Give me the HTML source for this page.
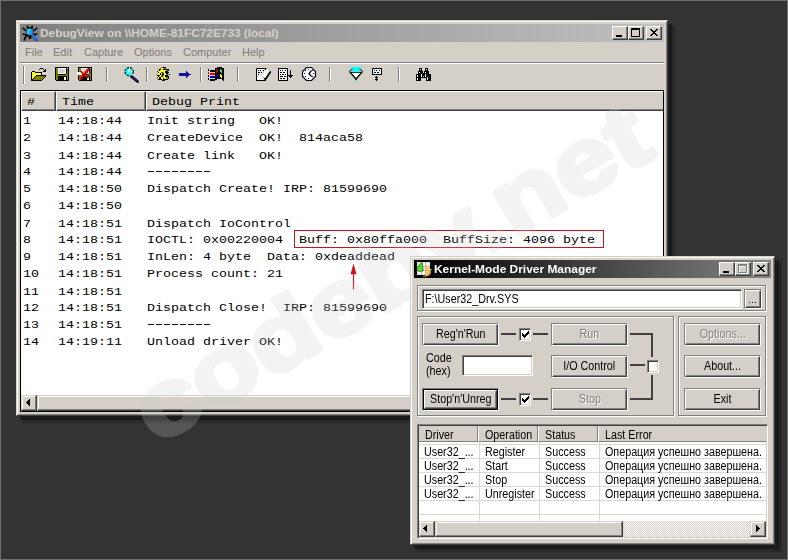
<!DOCTYPE html>
<html>
<head>
<meta charset="utf-8">
<title>DebugView</title>
<style>
*{box-sizing:border-box;margin:0;padding:0}
html,body{width:788px;height:560px;overflow:hidden;background:#333333}
body{position:relative;font-family:"Liberation Sans",sans-serif;font-size:11px;color:#000}
.abs{position:absolute}
#edge{position:absolute;left:0;top:0;width:788px;height:560px;border:1px solid #707070;z-index:50;pointer-events:none}
.win{position:absolute;background:#D4D0C8;
 border:1px solid;border-color:#D4D0C8 #404040 #404040 #D4D0C8;
 box-shadow:inset 1px 1px 0 #fff, inset -1px -1px 0 #808080, 4px 4px 0 rgba(0,0,0,.36), 5.5px 5.5px 1px 1px rgba(0,0,0,.2)}
.raised{background:#D4D0C8;border:1px solid;border-color:#fff #404040 #404040 #fff;box-shadow:inset -1px -1px 0 #808080}
.btn{position:absolute;background:#D4D0C8;border:1px solid;border-color:#fff #404040 #404040 #fff;
 box-shadow:inset -1px -1px 0 #808080, inset 1px 1px 0 #D4D0C8;text-align:center;white-space:nowrap}
.sunken{border:1px solid;border-color:#808080 #fff #fff #808080;box-shadow:inset 1px 1px 0 #404040, inset -1px -1px 0 #D4D0C8;background:#fff}
.etched{position:absolute;border:1px solid #808080;box-shadow:1px 1px 0 #fff, inset 1px 1px 0 #fff}
.mono{font-family:"Liberation Mono",monospace;font-size:13.33px;white-space:pre;color:#000;transform:scaleY(.8);transform-origin:0 0}
.tbtn{position:absolute;width:16px;height:14px;top:2px;background:#D4D0C8;border:1px solid;border-color:#fff #404040 #404040 #fff;box-shadow:inset -1px -1px 0 #808080}
.hdr{position:absolute;top:0;height:20px;background:#D4D0C8;border:1px solid;border-color:#fff #404040 #404040 #fff;box-shadow:inset -1px -1px 0 #808080}
.row{position:absolute;left:0;height:17px;line-height:17px}
.sep{position:absolute;top:67px;width:2px;height:15px;border-left:1px solid #808080;border-right:1px solid #fff}
.sb{border-color:#D4D0C8 #404040 #404040 #D4D0C8;box-shadow:inset -1px -1px 0 #808080, inset 1px 1px 0 #fff}
.kb{line-height:19px}
.ms{display:inline-block;font-size:12.5px;transform:scaleX(.86);transform-origin:center center;white-space:pre}
.msl{display:inline-block;font-size:12.5px;transform:scaleX(.86);transform-origin:left center;white-space:pre}
.khdr{position:absolute;top:0;height:16px;background:#D4D0C8;border-left:1px solid #fff;border-right:1px solid #808080;border-bottom:1px solid #808080}
.se{position:absolute;border:1px solid;border-color:#808080 #fff #fff #808080}
.dis{color:#808080;text-shadow:1px 1px 0 #fff}
</style>
</head>
<body>

<!-- ================= DebugView window ================= -->
<div class="win" id="dv" style="left:16px;top:20px;width:652px;height:396px"></div>
<div class="abs" id="dvtitle" style="left:20px;top:24px;width:644px;height:18px;background:linear-gradient(to right,#808080,#c0c0c0)">
  <svg class="abs" id="dvicon" style="left:1px;top:1px" width="17" height="16" viewBox="21 25 17 16">
    <g stroke="#000" stroke-width="1.6" fill="none" stroke-linecap="square">
      <path d="M27.5 26.3v1.2M32.2 26.3v1.2"/>
      <path d="M23.3 28.3l2.6 2.2M36.6 28.3l-2.7 2.2M23.4 34.2l2.6.6M36.6 34.2l-2.2.4M24.5 39.8l.4-2l1.9-2.2"/>
    </g>
    <path d="M27.4 27.2h5.2v1.6h-5.2z" fill="#000"/>
    <ellipse cx="29.9" cy="32.6" rx="3.6" ry="5" fill="#111"/>
    <rect x="28.8" y="36.6" width="2.4" height="2.4" fill="#000"/>
    <path d="M32.2 35.4l5 5" stroke="#0a1a80" stroke-width="2.6" stroke-linecap="round"/>
    <path d="M32 35l4.9 4.9" stroke="#2a8cf4" stroke-width="1.7" stroke-linecap="round"/>
    <circle cx="29.8" cy="31.8" r="3.2" fill="#2f8ff2"/>
    <path d="M26.8 32.2a3 3 0 0 1 3-3.4q.8 0 .9.6q-1.4 1.2-1.2 3.2q.1 1.6-.8 2.2q-1.5-.6-1.9-2.600z" fill="#14d8fb"/>
    <rect x="30.2" y="30" width=".8" height=".8" fill="#7d8ea0"/><rect x="31.2" y="32" width=".8" height=".8" fill="#7d8ea0"/>
  </svg>
  <div class="abs" id="dvtt" style="left:20px;top:2px;font-weight:bold;color:#D4D0C8;font-size:11px;line-height:14px;white-space:pre;transform:scaleX(1.077);transform-origin:left center">DebugView on \\HOME-81FC72E733 (local)</div>
  <div class="tbtn" style="left:592px"><svg class="abs" style="left:-1px;top:-1px" width="16" height="14" shape-rendering="crispEdges"><rect x="4" y="9" width="6" height="2" fill="#000"/></svg></div>
  <div class="tbtn" style="left:608px"><svg class="abs" style="left:-1px;top:-1px" width="16" height="14" shape-rendering="crispEdges"><path d="M3 2h9v9h-9zM4 4v6h7v-6z" fill="#000" fill-rule="evenodd"/></svg></div>
  <div class="tbtn" style="left:626px"><svg class="abs" style="left:-1px;top:-1px" width="16" height="14" shape-rendering="crispEdges"><path d="M4 3h2v1h1v1h2v-1h1v-1h2v1h-1v1h-1v1h-1v1h1v1h1v1h1v1h-2v-1h-1v-1h-2v1h-1v1h-2v-1h1v-1h1v-1h1v-1h-1v-1h-1v-1h-1z" fill="#000"/></svg></div>
</div>
<!-- menu -->
<div class="abs" id="menu" style="left:20px;top:42px;width:644px;height:20px;color:#7d7d7d;line-height:21px">
  <span class="abs" style="left:5px">File</span>
  <span class="abs" style="left:33px">Edit</span>
  <span class="abs" style="left:64px">Capture</span>
  <span class="abs" style="left:114px">Options</span>
  <span class="abs" style="left:163px">Computer</span>
  <span class="abs" style="left:222px">Help</span>
</div>
<div class="abs" style="left:20px;top:62px;width:644px;height:2px;border-top:1px solid #808080;border-bottom:1px solid #fff"></div>
<!-- toolbar -->
<div class="sep" style="left:23px;top:66px;height:18px"></div>
<div class="sep" style="left:106px"></div>
<div class="sep" style="left:146px"></div>
<div class="sep" style="left:200px"></div>
<div class="sep" style="left:237px"></div>
<div class="sep" style="left:329px"></div>
<div class="sep" style="left:398px"></div>
<svg class="abs" id="tbicons" style="left:20px;top:64px" width="644" height="24" viewBox="20 64 644 24"><g shape-rendering="crispEdges"><rect x="40" y="68" width="3" height="1" fill="#000"/><rect x="39" y="69" width="1" height="1" fill="#000"/><rect x="43" y="69" width="1" height="1" fill="#000"/><rect x="45" y="69" width="1" height="1" fill="#000"/><rect x="44" y="70" width="2" height="1" fill="#000"/><rect x="32" y="71" width="3" height="1" fill="#000"/><rect x="43" y="71" width="3" height="1" fill="#000"/><rect x="31" y="72" width="1" height="1" fill="#000"/><rect x="32" y="72" width="3" height="1" fill="#ffff00"/><rect x="35" y="72" width="7" height="1" fill="#000"/><rect x="31" y="73" width="1" height="1" fill="#000"/><rect x="32" y="73" width="1" height="1" fill="#ffff00"/><rect x="33" y="73" width="1" height="1" fill="#fff"/><rect x="34" y="73" width="3" height="1" fill="#ffff00"/><rect x="37" y="73" width="1" height="1" fill="#fff"/><rect x="38" y="73" width="3" height="1" fill="#ffff00"/><rect x="41" y="73" width="1" height="1" fill="#000"/><rect x="31" y="74" width="1" height="1" fill="#000"/><rect x="32" y="74" width="3" height="1" fill="#ffff00"/><rect x="35" y="74" width="1" height="1" fill="#fff"/><rect x="36" y="74" width="3" height="1" fill="#ffff00"/><rect x="39" y="74" width="1" height="1" fill="#fff"/><rect x="40" y="74" width="1" height="1" fill="#ffff00"/><rect x="41" y="74" width="1" height="1" fill="#000"/><rect x="31" y="75" width="1" height="1" fill="#000"/><rect x="32" y="75" width="1" height="1" fill="#ffff00"/><rect x="33" y="75" width="1" height="1" fill="#fff"/><rect x="34" y="75" width="2" height="1" fill="#ffff00"/><rect x="36" y="75" width="10" height="1" fill="#000"/><rect x="31" y="76" width="1" height="1" fill="#000"/><rect x="32" y="76" width="3" height="1" fill="#ffff00"/><rect x="35" y="76" width="1" height="1" fill="#000"/><rect x="36" y="76" width="9" height="1" fill="#808000"/><rect x="45" y="76" width="1" height="1" fill="#000"/><rect x="31" y="77" width="1" height="1" fill="#000"/><rect x="32" y="77" width="1" height="1" fill="#fff"/><rect x="33" y="77" width="1" height="1" fill="#ffff00"/><rect x="34" y="77" width="1" height="1" fill="#000"/><rect x="35" y="77" width="9" height="1" fill="#808000"/><rect x="44" y="77" width="1" height="1" fill="#000"/><rect x="31" y="78" width="1" height="1" fill="#000"/><rect x="32" y="78" width="1" height="1" fill="#ffff00"/><rect x="33" y="78" width="1" height="1" fill="#000"/><rect x="34" y="78" width="9" height="1" fill="#808000"/><rect x="43" y="78" width="1" height="1" fill="#000"/><rect x="31" y="79" width="2" height="1" fill="#000"/><rect x="33" y="79" width="9" height="1" fill="#808000"/><rect x="42" y="79" width="1" height="1" fill="#000"/><rect x="31" y="80" width="11" height="1" fill="#000"/><rect x="55" y="67" width="14" height="1" fill="#000"/><rect x="55" y="68" width="1" height="1" fill="#000"/><rect x="56" y="68" width="2" height="1" fill="#808000"/><rect x="58" y="68" width="8" height="1" fill="#fff"/><rect x="66" y="68" width="1" height="1" fill="#000"/><rect x="67" y="68" width="1" height="1" fill="#fff"/><rect x="68" y="68" width="1" height="1" fill="#000"/><rect x="55" y="69" width="1" height="1" fill="#000"/><rect x="56" y="69" width="2" height="1" fill="#808000"/><rect x="58" y="69" width="1" height="1" fill="#fff"/><rect x="59" y="69" width="6" height="1" fill="#d4d0c8"/><rect x="65" y="69" width="1" height="1" fill="#fff"/><rect x="66" y="69" width="3" height="1" fill="#000"/><rect x="55" y="70" width="1" height="1" fill="#000"/><rect x="56" y="70" width="2" height="1" fill="#808000"/><rect x="58" y="70" width="1" height="1" fill="#fff"/><rect x="59" y="70" width="6" height="1" fill="#d4d0c8"/><rect x="65" y="70" width="1" height="1" fill="#fff"/><rect x="66" y="70" width="1" height="1" fill="#000"/><rect x="67" y="70" width="1" height="1" fill="#808000"/><rect x="68" y="70" width="1" height="1" fill="#000"/><rect x="55" y="71" width="1" height="1" fill="#000"/><rect x="56" y="71" width="2" height="1" fill="#808000"/><rect x="58" y="71" width="1" height="1" fill="#fff"/><rect x="59" y="71" width="6" height="1" fill="#d4d0c8"/><rect x="65" y="71" width="1" height="1" fill="#fff"/><rect x="66" y="71" width="1" height="1" fill="#000"/><rect x="67" y="71" width="1" height="1" fill="#808000"/><rect x="68" y="71" width="1" height="1" fill="#000"/><rect x="55" y="72" width="1" height="1" fill="#000"/><rect x="56" y="72" width="2" height="1" fill="#808000"/><rect x="58" y="72" width="1" height="1" fill="#fff"/><rect x="59" y="72" width="6" height="1" fill="#d4d0c8"/><rect x="65" y="72" width="1" height="1" fill="#fff"/><rect x="66" y="72" width="1" height="1" fill="#000"/><rect x="67" y="72" width="1" height="1" fill="#808000"/><rect x="68" y="72" width="1" height="1" fill="#000"/><rect x="55" y="73" width="1" height="1" fill="#000"/><rect x="56" y="73" width="2" height="1" fill="#808000"/><rect x="58" y="73" width="8" height="1" fill="#fff"/><rect x="66" y="73" width="1" height="1" fill="#000"/><rect x="67" y="73" width="1" height="1" fill="#808000"/><rect x="68" y="73" width="1" height="1" fill="#000"/><rect x="55" y="74" width="1" height="1" fill="#000"/><rect x="56" y="74" width="2" height="1" fill="#808000"/><rect x="58" y="74" width="8" height="1" fill="#000"/><rect x="66" y="74" width="2" height="1" fill="#808000"/><rect x="68" y="74" width="1" height="1" fill="#000"/><rect x="55" y="75" width="1" height="1" fill="#000"/><rect x="56" y="75" width="12" height="1" fill="#808000"/><rect x="68" y="75" width="1" height="1" fill="#000"/><rect x="55" y="76" width="1" height="1" fill="#000"/><rect x="56" y="76" width="2" height="1" fill="#808000"/><rect x="58" y="76" width="9" height="1" fill="#000"/><rect x="67" y="76" width="1" height="1" fill="#808000"/><rect x="68" y="76" width="1" height="1" fill="#000"/><rect x="55" y="77" width="1" height="1" fill="#000"/><rect x="56" y="77" width="2" height="1" fill="#808000"/><rect x="58" y="77" width="6" height="1" fill="#000"/><rect x="64" y="77" width="2" height="1" fill="#fff"/><rect x="66" y="77" width="1" height="1" fill="#000"/><rect x="67" y="77" width="1" height="1" fill="#808000"/><rect x="68" y="77" width="1" height="1" fill="#000"/><rect x="55" y="78" width="1" height="1" fill="#000"/><rect x="56" y="78" width="2" height="1" fill="#808000"/><rect x="58" y="78" width="6" height="1" fill="#000"/><rect x="64" y="78" width="2" height="1" fill="#fff"/><rect x="66" y="78" width="1" height="1" fill="#000"/><rect x="67" y="78" width="1" height="1" fill="#808000"/><rect x="68" y="78" width="1" height="1" fill="#000"/><rect x="55" y="79" width="1" height="1" fill="#000"/><rect x="56" y="79" width="2" height="1" fill="#808000"/><rect x="58" y="79" width="6" height="1" fill="#000"/><rect x="64" y="79" width="2" height="1" fill="#fff"/><rect x="66" y="79" width="1" height="1" fill="#000"/><rect x="67" y="79" width="1" height="1" fill="#808000"/><rect x="68" y="79" width="1" height="1" fill="#000"/><rect x="56" y="80" width="13" height="1" fill="#000"/><rect x="78" y="67" width="14" height="1" fill="#000"/><rect x="78" y="68" width="1" height="1" fill="#000"/><rect x="79" y="68" width="2" height="1" fill="#808000"/><rect x="81" y="68" width="8" height="1" fill="#fff"/><rect x="89" y="68" width="1" height="1" fill="#000"/><rect x="90" y="68" width="1" height="1" fill="#fff"/><rect x="91" y="68" width="1" height="1" fill="#000"/><rect x="78" y="69" width="1" height="1" fill="#000"/><rect x="79" y="69" width="2" height="1" fill="#808000"/><rect x="81" y="69" width="1" height="1" fill="#fff"/><rect x="82" y="69" width="6" height="1" fill="#d4d0c8"/><rect x="88" y="69" width="1" height="1" fill="#fff"/><rect x="89" y="69" width="3" height="1" fill="#000"/><rect x="78" y="70" width="1" height="1" fill="#000"/><rect x="79" y="70" width="2" height="1" fill="#808000"/><rect x="81" y="70" width="1" height="1" fill="#fff"/><rect x="82" y="70" width="6" height="1" fill="#d4d0c8"/><rect x="88" y="70" width="1" height="1" fill="#fff"/><rect x="89" y="70" width="1" height="1" fill="#000"/><rect x="90" y="70" width="1" height="1" fill="#808000"/><rect x="91" y="70" width="1" height="1" fill="#000"/><rect x="78" y="71" width="1" height="1" fill="#000"/><rect x="79" y="71" width="2" height="1" fill="#808000"/><rect x="81" y="71" width="1" height="1" fill="#fff"/><rect x="82" y="71" width="6" height="1" fill="#d4d0c8"/><rect x="88" y="71" width="1" height="1" fill="#fff"/><rect x="89" y="71" width="1" height="1" fill="#000"/><rect x="90" y="71" width="1" height="1" fill="#808000"/><rect x="91" y="71" width="1" height="1" fill="#000"/><rect x="78" y="72" width="1" height="1" fill="#000"/><rect x="79" y="72" width="2" height="1" fill="#808000"/><rect x="81" y="72" width="1" height="1" fill="#fff"/><rect x="82" y="72" width="6" height="1" fill="#d4d0c8"/><rect x="88" y="72" width="1" height="1" fill="#fff"/><rect x="89" y="72" width="1" height="1" fill="#000"/><rect x="90" y="72" width="1" height="1" fill="#808000"/><rect x="91" y="72" width="1" height="1" fill="#000"/><rect x="78" y="73" width="1" height="1" fill="#000"/><rect x="79" y="73" width="2" height="1" fill="#808000"/><rect x="81" y="73" width="8" height="1" fill="#fff"/><rect x="89" y="73" width="1" height="1" fill="#000"/><rect x="90" y="73" width="1" height="1" fill="#808000"/><rect x="91" y="73" width="1" height="1" fill="#000"/><rect x="78" y="74" width="1" height="1" fill="#000"/><rect x="79" y="74" width="2" height="1" fill="#808000"/><rect x="81" y="74" width="8" height="1" fill="#000"/><rect x="89" y="74" width="2" height="1" fill="#808000"/><rect x="91" y="74" width="1" height="1" fill="#000"/><rect x="78" y="75" width="1" height="1" fill="#000"/><rect x="79" y="75" width="12" height="1" fill="#808000"/><rect x="91" y="75" width="1" height="1" fill="#000"/><rect x="78" y="76" width="1" height="1" fill="#000"/><rect x="79" y="76" width="2" height="1" fill="#808000"/><rect x="81" y="76" width="9" height="1" fill="#000"/><rect x="90" y="76" width="1" height="1" fill="#808000"/><rect x="91" y="76" width="1" height="1" fill="#000"/><rect x="78" y="77" width="1" height="1" fill="#000"/><rect x="79" y="77" width="2" height="1" fill="#808000"/><rect x="81" y="77" width="6" height="1" fill="#000"/><rect x="87" y="77" width="2" height="1" fill="#fff"/><rect x="89" y="77" width="1" height="1" fill="#000"/><rect x="90" y="77" width="1" height="1" fill="#808000"/><rect x="91" y="77" width="1" height="1" fill="#000"/><rect x="78" y="78" width="1" height="1" fill="#000"/><rect x="79" y="78" width="2" height="1" fill="#808000"/><rect x="81" y="78" width="6" height="1" fill="#000"/><rect x="87" y="78" width="2" height="1" fill="#fff"/><rect x="89" y="78" width="1" height="1" fill="#000"/><rect x="90" y="78" width="1" height="1" fill="#808000"/><rect x="91" y="78" width="1" height="1" fill="#000"/><rect x="78" y="79" width="1" height="1" fill="#000"/><rect x="79" y="79" width="2" height="1" fill="#808000"/><rect x="81" y="79" width="6" height="1" fill="#000"/><rect x="87" y="79" width="2" height="1" fill="#fff"/><rect x="89" y="79" width="1" height="1" fill="#000"/><rect x="90" y="79" width="1" height="1" fill="#808000"/><rect x="91" y="79" width="1" height="1" fill="#000"/><rect x="79" y="80" width="13" height="1" fill="#000"/><rect x="77" y="72" width="5" height="3" fill="#fff"/><rect x="161" y="67" width="2" height="1" fill="#808000"/><rect x="163" y="67" width="3" height="1" fill="#000"/><rect x="160" y="68" width="1" height="1" fill="#808000"/><rect x="161" y="68" width="2" height="1" fill="#ffff00"/><rect x="163" y="68" width="3" height="1" fill="#808000"/><rect x="158" y="69" width="1" height="1" fill="#808000"/><rect x="159" y="69" width="2" height="1" fill="#000"/><rect x="161" y="69" width="2" height="1" fill="#ffff00"/><rect x="163" y="69" width="6" height="1" fill="#000"/><rect x="157" y="70" width="2" height="1" fill="#ffff00"/><rect x="159" y="70" width="1" height="1" fill="#000"/><rect x="161" y="70" width="2" height="1" fill="#ffff00"/><rect x="164" y="70" width="2" height="1" fill="#ffff00"/><rect x="166" y="70" width="2" height="1" fill="#808000"/><rect x="168" y="70" width="1" height="1" fill="#000"/><rect x="157" y="71" width="1" height="1" fill="#000"/><rect x="158" y="71" width="7" height="1" fill="#ffff00"/><rect x="165" y="71" width="3" height="1" fill="#000"/><rect x="158" y="72" width="1" height="1" fill="#000"/><rect x="159" y="72" width="2" height="1" fill="#ffff00"/><rect x="161" y="72" width="1" height="1" fill="#808000"/><rect x="162" y="72" width="1" height="1" fill="#000"/><rect x="164" y="72" width="1" height="1" fill="#ffff00"/><rect x="165" y="72" width="4" height="1" fill="#000"/><rect x="158" y="73" width="2" height="1" fill="#ffff00"/><rect x="160" y="73" width="1" height="1" fill="#000"/><rect x="161" y="73" width="1" height="1" fill="#ffff00"/><rect x="162" y="73" width="1" height="1" fill="#808000"/><rect x="163" y="73" width="1" height="1" fill="#000"/><rect x="164" y="73" width="2" height="1" fill="#ffff00"/><rect x="166" y="73" width="2" height="1" fill="#000"/><rect x="156" y="74" width="1" height="1" fill="#808000"/><rect x="157" y="74" width="1" height="1" fill="#fff"/><rect x="158" y="74" width="2" height="1" fill="#ffff00"/><rect x="160" y="74" width="1" height="1" fill="#000"/><rect x="161" y="74" width="1" height="1" fill="#808000"/><rect x="162" y="74" width="2" height="1" fill="#000"/><rect x="164" y="74" width="1" height="1" fill="#ffff00"/><rect x="165" y="74" width="1" height="1" fill="#fff"/><rect x="166" y="74" width="3" height="1" fill="#808000"/><rect x="169" y="74" width="1" height="1" fill="#000"/><rect x="157" y="75" width="3" height="1" fill="#000"/><rect x="160" y="75" width="2" height="1" fill="#ffff00"/><rect x="162" y="75" width="1" height="1" fill="#000"/><rect x="163" y="75" width="1" height="1" fill="#808000"/><rect x="164" y="75" width="1" height="1" fill="#ffff00"/><rect x="165" y="75" width="3" height="1" fill="#000"/><rect x="158" y="76" width="1" height="1" fill="#000"/><rect x="159" y="76" width="2" height="1" fill="#ffff00"/><rect x="161" y="76" width="2" height="1" fill="#000"/><rect x="163" y="76" width="2" height="1" fill="#ffff00"/><rect x="165" y="76" width="4" height="1" fill="#000"/><rect x="157" y="77" width="1" height="1" fill="#808000"/><rect x="158" y="77" width="1" height="1" fill="#ffff00"/><rect x="159" y="77" width="2" height="1" fill="#000"/><rect x="161" y="77" width="5" height="1" fill="#ffff00"/><rect x="166" y="77" width="2" height="1" fill="#808000"/><rect x="168" y="77" width="1" height="1" fill="#000"/><rect x="157" y="78" width="1" height="1" fill="#808000"/><rect x="158" y="78" width="1" height="1" fill="#ffff00"/><rect x="159" y="78" width="2" height="1" fill="#000"/><rect x="161" y="78" width="1" height="1" fill="#ffff00"/><rect x="163" y="78" width="1" height="1" fill="#000"/><rect x="164" y="78" width="2" height="1" fill="#ffff00"/><rect x="166" y="78" width="2" height="1" fill="#808000"/><rect x="168" y="78" width="1" height="1" fill="#000"/><rect x="158" y="79" width="4" height="1" fill="#000"/><rect x="162" y="79" width="1" height="1" fill="#ffff00"/><rect x="163" y="79" width="5" height="1" fill="#000"/><rect x="162" y="80" width="3" height="1" fill="#000"/><rect x="217" y="67" width="5" height="1" fill="#000"/><rect x="215" y="68" width="9" height="1" fill="#000"/><rect x="208" y="69" width="1" height="1" fill="#000"/><rect x="215" y="69" width="2" height="1" fill="#000"/><rect x="217" y="69" width="1" height="1" fill="#e00000"/><rect x="218" y="69" width="2" height="1" fill="#000"/><rect x="220" y="69" width="1" height="1" fill="#40f040"/><rect x="221" y="69" width="3" height="1" fill="#000"/><rect x="208" y="70" width="1" height="1" fill="#000"/><rect x="210" y="70" width="6" height="1" fill="#000"/><rect x="216" y="70" width="2" height="1" fill="#e00000"/><rect x="218" y="70" width="2" height="1" fill="#000"/><rect x="220" y="70" width="2" height="1" fill="#40f040"/><rect x="222" y="70" width="2" height="1" fill="#000"/><rect x="210" y="71" width="6" height="1" fill="#000"/><rect x="216" y="71" width="2" height="1" fill="#e00000"/><rect x="218" y="71" width="2" height="1" fill="#000"/><rect x="220" y="71" width="2" height="1" fill="#40f040"/><rect x="222" y="71" width="2" height="1" fill="#000"/><rect x="208" y="72" width="1" height="1" fill="#e00000"/><rect x="215" y="72" width="1" height="1" fill="#000"/><rect x="216" y="72" width="1" height="1" fill="#e00000"/><rect x="217" y="72" width="4" height="1" fill="#000"/><rect x="221" y="72" width="1" height="1" fill="#40f040"/><rect x="222" y="72" width="2" height="1" fill="#000"/><rect x="208" y="73" width="1" height="1" fill="#e00000"/><rect x="210" y="73" width="5" height="1" fill="#e00000"/><rect x="215" y="73" width="9" height="1" fill="#000"/><rect x="210" y="74" width="5" height="1" fill="#e00000"/><rect x="215" y="74" width="2" height="1" fill="#000"/><rect x="217" y="74" width="1" height="1" fill="#0000a8"/><rect x="218" y="74" width="2" height="1" fill="#000"/><rect x="220" y="74" width="1" height="1" fill="#ffff00"/><rect x="221" y="74" width="3" height="1" fill="#000"/><rect x="208" y="75" width="1" height="1" fill="#0000a8"/><rect x="215" y="75" width="1" height="1" fill="#000"/><rect x="216" y="75" width="2" height="1" fill="#0000a8"/><rect x="218" y="75" width="2" height="1" fill="#000"/><rect x="220" y="75" width="2" height="1" fill="#ffff00"/><rect x="222" y="75" width="2" height="1" fill="#000"/><rect x="208" y="76" width="1" height="1" fill="#0000a8"/><rect x="210" y="76" width="5" height="1" fill="#0000a8"/><rect x="215" y="76" width="1" height="1" fill="#000"/><rect x="216" y="76" width="2" height="1" fill="#0000a8"/><rect x="218" y="76" width="2" height="1" fill="#000"/><rect x="220" y="76" width="2" height="1" fill="#ffff00"/><rect x="222" y="76" width="2" height="1" fill="#000"/><rect x="210" y="77" width="5" height="1" fill="#0000a8"/><rect x="215" y="77" width="1" height="1" fill="#000"/><rect x="216" y="77" width="1" height="1" fill="#0000a8"/><rect x="217" y="77" width="4" height="1" fill="#000"/><rect x="221" y="77" width="1" height="1" fill="#ffff00"/><rect x="222" y="77" width="2" height="1" fill="#000"/><rect x="208" y="78" width="1" height="1" fill="#000"/><rect x="215" y="78" width="9" height="1" fill="#000"/><rect x="208" y="79" width="1" height="1" fill="#000"/><rect x="210" y="79" width="7" height="1" fill="#000"/><rect x="222" y="79" width="2" height="1" fill="#000"/><rect x="210" y="80" width="5" height="1" fill="#000"/><rect x="223" y="80" width="1" height="1" fill="#000"/><rect x="419" y="68" width="3" height="1" fill="#000"/><rect x="425" y="68" width="3" height="1" fill="#000"/><rect x="419" y="69" width="1" height="1" fill="#000"/><rect x="420" y="69" width="1" height="1" fill="#fff"/><rect x="421" y="69" width="1" height="1" fill="#000"/><rect x="425" y="69" width="1" height="1" fill="#000"/><rect x="426" y="69" width="1" height="1" fill="#fff"/><rect x="427" y="69" width="1" height="1" fill="#000"/><rect x="419" y="70" width="3" height="1" fill="#000"/><rect x="425" y="70" width="3" height="1" fill="#000"/><rect x="418" y="71" width="5" height="1" fill="#000"/><rect x="424" y="71" width="5" height="1" fill="#000"/><rect x="418" y="72" width="1" height="1" fill="#000"/><rect x="419" y="72" width="1" height="1" fill="#fff"/><rect x="420" y="72" width="3" height="1" fill="#000"/><rect x="424" y="72" width="1" height="1" fill="#000"/><rect x="425" y="72" width="1" height="1" fill="#fff"/><rect x="426" y="72" width="3" height="1" fill="#000"/><rect x="418" y="73" width="11" height="1" fill="#000"/><rect x="416" y="74" width="5" height="1" fill="#000"/><rect x="421" y="74" width="1" height="1" fill="#fff"/><rect x="422" y="74" width="3" height="1" fill="#000"/><rect x="425" y="74" width="1" height="1" fill="#fff"/><rect x="426" y="74" width="5" height="1" fill="#000"/><rect x="416" y="75" width="1" height="1" fill="#000"/><rect x="417" y="75" width="1" height="1" fill="#fff"/><rect x="418" y="75" width="3" height="1" fill="#000"/><rect x="421" y="75" width="1" height="1" fill="#fff"/><rect x="422" y="75" width="3" height="1" fill="#000"/><rect x="425" y="75" width="1" height="1" fill="#fff"/><rect x="426" y="75" width="5" height="1" fill="#000"/><rect x="416" y="76" width="1" height="1" fill="#000"/><rect x="417" y="76" width="1" height="1" fill="#fff"/><rect x="418" y="76" width="3" height="1" fill="#000"/><rect x="421" y="76" width="1" height="1" fill="#fff"/><rect x="422" y="76" width="1" height="1" fill="#000"/><rect x="424" y="76" width="1" height="1" fill="#000"/><rect x="425" y="76" width="1" height="1" fill="#fff"/><rect x="426" y="76" width="5" height="1" fill="#000"/><rect x="416" y="77" width="11" height="1" fill="#000"/><rect x="428" y="77" width="3" height="1" fill="#000"/><rect x="416" y="78" width="1" height="1" fill="#000"/><rect x="417" y="78" width="1" height="1" fill="#fff"/><rect x="418" y="78" width="3" height="1" fill="#000"/><rect x="426" y="78" width="1" height="1" fill="#000"/><rect x="427" y="78" width="1" height="1" fill="#fff"/><rect x="428" y="78" width="3" height="1" fill="#000"/><rect x="416" y="79" width="1" height="1" fill="#000"/><rect x="417" y="79" width="1" height="1" fill="#fff"/><rect x="418" y="79" width="3" height="1" fill="#000"/><rect x="426" y="79" width="1" height="1" fill="#000"/><rect x="427" y="79" width="1" height="1" fill="#fff"/><rect x="428" y="79" width="3" height="1" fill="#000"/><rect x="416" y="80" width="5" height="1" fill="#000"/><rect x="426" y="80" width="5" height="1" fill="#000"/><rect x="179" y="73" width="8" height="3" fill="#1010a0"/><path d="M186 71h1v1h1v1h1v1h2v1h-2v1h-1v1h-1v1h-1z" fill="#1010a0"/><rect x="256.5" y="68.5" width="9" height="12" fill="#f4f4f4" stroke="#000"/><rect x="258" y="70" width="1" height="1" fill="#000"/><rect x="260" y="70" width="1" height="1" fill="#000"/><rect x="263" y="70" width="1" height="1" fill="#000"/><rect x="258" y="72" width="2" height="1" fill="#000"/><rect x="261" y="72" width="1" height="1" fill="#000"/><rect x="258" y="74" width="1" height="1" fill="#000"/><rect x="278.5" y="68.5" width="9" height="12" fill="#f4f4f4" stroke="#000"/><rect x="280" y="70" width="1" height="1" fill="#000"/><rect x="282" y="70" width="1" height="1" fill="#000"/><rect x="285" y="70" width="1" height="1" fill="#000"/><rect x="280" y="72" width="2" height="1" fill="#000"/><rect x="283" y="72" width="2" height="1" fill="#000"/><rect x="280" y="74" width="1" height="1" fill="#000"/><rect x="282" y="74" width="2" height="1" fill="#000"/><rect x="285" y="74" width="1" height="1" fill="#000"/><rect x="280" y="76" width="3" height="1" fill="#000"/><rect x="284" y="76" width="2" height="1" fill="#000"/><rect x="280" y="78" width="2" height="1" fill="#000"/><rect x="283" y="78" width="2" height="1" fill="#000"/><rect x="290" y="70" width="1" height="8" fill="#000"/><rect x="289" y="76" width="3" height="1" fill="#000"/><rect x="288" y="75" width="5" height="1" fill="#000"/><rect x="372.5" y="68.5" width="9" height="6" fill="#f4f4f4" stroke="#000"/><rect x="374" y="70" width="1" height="1" fill="#000"/><rect x="376" y="70" width="1" height="1" fill="#000"/><rect x="379" y="70" width="1" height="1" fill="#000"/><rect x="374" y="72" width="2" height="1" fill="#000"/><rect x="377" y="72" width="2" height="1" fill="#000"/><rect x="376" y="76" width="1" height="5" fill="#000"/><rect x="375" y="77" width="3" height="1" fill="#000"/><rect x="375" y="79" width="3" height="1" fill="#000"/></g><g><path d="M80.5 78.5L86 72.5L88.5 69" stroke="#dd0000" stroke-width="2.2" fill="none" stroke-linecap="round"/><path d="M84.5 72l3.5-3 1 .5-1.5 4z" fill="#dd0000"/><path d="M80.8 71.3L88 78" stroke="#dd0000" stroke-width="1.6" fill="none" stroke-linecap="round"/><path d="M131.5 76.5L137.5 81.5" stroke="#000" stroke-width="2.9" stroke-linecap="round"/><path d="M132.3 77.2L137 81" stroke="#1818a0" stroke-width="1.3" stroke-linecap="round"/><circle cx="129.1" cy="71.7" r="4.1" fill="#00ffff" stroke="#000" stroke-width="1.2" stroke-dasharray="2.2 1.1"/><path d="M127.5 73.5l1-4.5 1.5-.8.5 3z" fill="#fff"/><rect x="131" y="71" width="1.5" height="1.5" fill="#fff"/><rect x="130.3" y="74" width="1.5" height="1.5" fill="#fff"/><path d="M267.3 68.3L270.6 71.4L265.4 79.2L260.6 74.6z" fill="#fff" stroke="#000" stroke-width=".5" stroke-dasharray="1 1"/><path d="M270.6 71.6L265.4 79.4L264.2 78.2" fill="none" stroke="#000" stroke-width="1.8"/><path d="M306.5 67.5h5l4 4v5l-4 4h-5l-4-4v-5z" fill="#fbfbfb" stroke="#000" stroke-width="1.2"/><rect x="308" y="69" width="1" height="1" fill="#0000b0" shape-rendering="crispEdges"/><rect x="305" y="70" width="1" height="1" fill="#0000b0" shape-rendering="crispEdges"/><rect x="312" y="70" width="1" height="1" fill="#0000b0" shape-rendering="crispEdges"/><rect x="304" y="73" width="1" height="1" fill="#0000b0" shape-rendering="crispEdges"/><rect x="313" y="73" width="1" height="1" fill="#0000b0" shape-rendering="crispEdges"/><rect x="305" y="76" width="1" height="1" fill="#0000b0" shape-rendering="crispEdges"/><rect x="312" y="76" width="1" height="1" fill="#0000b0" shape-rendering="crispEdges"/><rect x="308" y="78" width="1" height="1" fill="#0000b0" shape-rendering="crispEdges"/><path d="M311.5 70.3L309 73.7L311.7 76.6" fill="none" stroke="#000" stroke-width="1.3"/><path d="M350 67h12l-3 4.5h-6z" fill="#00ffff"/><path d="M349.5 71.5L356 79L362.5 71.5" fill="#fff" stroke="#000" stroke-width="1.2"/><path d="M349.5 71.3q1-1.8 3-1.8M362.5 71.3q-1-1.8-3-1.8M351 72.3h10" fill="none" stroke="#000" stroke-width="1"/><path d="M353 70h6v1.8h-6z" fill="#00ffff"/><rect x="355.3" y="78.2" width="1.5" height="1.6" fill="#000"/><path d="M355.3 80h1.6l-.6 2z" fill="#00e0ff"/></g></svg>

<!-- list -->
<div class="abs" id="dvlist" style="left:20px;top:90px;width:644px;height:322px;border:1px solid #000;background:#fff;overflow:hidden">
  <div class="hdr" style="left:0;width:35px"></div>
  <div class="hdr" style="left:35px;width:90px"></div>
  <div class="hdr" style="left:125px;width:530px"></div>
  <div class="abs mono" style="left:6px;top:2.9px;line-height:21.25px">#</div>
  <div class="abs mono" style="left:41px;top:2.9px;line-height:21.25px">Time</div>
  <div class="abs mono" style="left:131px;top:2.9px;line-height:21.25px">Debug Print</div>
  <div class="abs mono" id="c1" style="left:2px;top:21.9px;line-height:21.25px">1
2
3
4
5
6
7
8
9
10
11
12
13
14</div>
  <div class="abs mono" id="c2" style="left:37px;top:21.9px;line-height:21.25px">14:18:44
14:18:44
14:18:44
14:18:44
14:18:50
14:18:50
14:18:51
14:18:51
14:18:51
14:18:51
14:18:51
14:18:51
14:18:51
14:19:11</div>
  <div class="abs mono" id="c3" style="left:126px;top:21.9px;line-height:21.25px">Init string   OK!
CreateDevice  OK!  814aca58
Create link   OK!

Dispatch Create! IRP: 81599690

Dispatch IoControl
IOCTL: 0x00220004  Buff: 0x80ffa000  BuffSize: 4096 byte
InLen: 4 byte  Data: 0xdeaddead
Process count: 21

Dispatch Close!  IRP: 81599690

Unload driver OK!</div>
<div class="abs" style="left:127px;top:80px;width:62px;height:1px;background:repeating-linear-gradient(to right,#111 0 6px,transparent 6px 8px)"></div><div class="abs" style="left:127px;top:233px;width:62px;height:1px;background:repeating-linear-gradient(to right,#111 0 6px,transparent 6px 8px)"></div>
  <!-- scrollbar -->
  <div class="abs" style="left:0;top:304px;width:642px;height:16px;background:#e9e7e3"></div>
  <div class="btn sb" style="left:0;top:304px;width:16px;height:16px"><svg class="abs" style="left:-1px;top:-1px" width="16" height="16" shape-rendering="crispEdges"><path d="M9 4v7h-1v-1h-1v-1h-1v-1h-1v-1h1v-1h1v-1h1v-1z" fill="#000"/></svg></div>
  <div class="btn sb" style="left:16px;top:304px;width:610px;height:16px"></div>
  <div class="btn sb" style="left:626px;top:304px;width:16px;height:16px"><svg class="abs" style="left:-1px;top:-1px" width="16" height="16" shape-rendering="crispEdges"><path d="M6 4v7h1v-1h1v-1h1v-1h1v-1h-1v-1h-1v-1h-1v-1z" fill="#000"/></svg></div>
</div>
<!-- red annotations -->
<div class="abs" style="left:294px;top:230px;width:310px;height:18px;border:1px solid #c4161c"></div>
<svg class="abs" style="left:345px;top:260px" width="18" height="32" viewBox="345 260 18 32"><path d="M353.5 289.5V272" stroke="#c4161c" stroke-width="1.2" fill="none"/><path d="M353.5 263.6l3 10.6h-6z" fill="#c4161c"/></svg>

<svg class="abs" id="wm" style="left:0;top:0;pointer-events:none" width="788" height="560" viewBox="0 0 788 560">
  <g opacity="0.22"><text transform="translate(155.7,445.2) rotate(-30) scale(1.198,1)" font-family="Liberation Sans, sans-serif" font-weight="bold" font-size="93" fill="#cdcdcd" stroke="#cdcdcd" stroke-width="4.5" stroke-linejoin="round">codeby.net</text></g>
</svg>
<div class="abs" id="kmdwrap" style="left:0px;top:0px;width:788px;height:560px;will-change:transform">
<!-- ================= KMD window ================= -->
<div class="win" id="kmd" style="left:410px;top:256px;width:365px;height:289px"></div>
<div class="abs" id="kmdtitle" style="left:414px;top:260px;width:357px;height:18px;background:linear-gradient(to right,#000,#848484)">
  <svg class="abs" id="kicon" style="left:2px;top:1px" width="17" height="16" viewBox="416 261 17 16">
    <rect x="417" y="262" width="13" height="13" fill="#dcdfe2"/>
    <g stroke="#c9a98a" stroke-width=".8" fill="none"><path d="M417 266.500h13M417 270.500h13M421.500 262v13M425.500 262v13"/></g>
    <g fill="#fff"><rect x="422.300" y="263" width="2.700" height="2.800"/><rect x="426.300" y="263" width="2.900" height="2.800"/><rect x="422.300" y="267.300" width="2.700" height="2.600"/><rect x="418" y="271.300" width="2.800" height="2.800"/><rect x="422.300" y="271.300" width="2.700" height="2.800"/></g>
    <path d="M422 262.200L422.900 267.500L423.200 270.900L418.300 271.400L416.900 268.600L418.500 266.200L420.200 263.900z" fill="#36e03c" stroke="#5f7f14" stroke-width="1"/>
    <rect x="419" y="268.700" width="1.100" height="1.100" fill="#ffc8a0"/>
    <path d="M425.700 267.200Q431.400 267.300 430.900 272Q430 276.300 424.200 276.800Q427.800 273.800 426.200 270.200z" fill="#ffb468"/>
    <path d="M430.400 269.800Q431.200 273 428.600 275.600" fill="none" stroke="#9aa820" stroke-width=".9"/>
    <rect x="427" y="268" width="2.300" height="1.700" fill="#ffee00"/>
    <rect x="430.600" y="269" width="1" height="1" fill="#eee"/>
    <path d="M423.200 275.400l2.200.300l-.5 1.100l-1.900-.2z" fill="#8aa010"/>
  </svg>
  <div class="abs" id="kmdtt" style="left:20px;top:2px;font-weight:bold;color:#fff;font-size:11px;line-height:14px;white-space:pre;transform:scaleX(1.085);transform-origin:left center">Kernel-Mode Driver Manager</div>
  <div class="tbtn" style="left:305px"><svg class="abs" style="left:-1px;top:-1px" width="16" height="14" shape-rendering="crispEdges"><rect x="4" y="9" width="6" height="2" fill="#000"/></svg></div>
  <div class="tbtn" style="left:321px"><svg class="abs" style="left:-1px;top:-1px" width="16" height="14" shape-rendering="crispEdges"><path d="M4 3h9v9h-9zM5 5v6h7v-6z" fill="#fff" fill-rule="evenodd"/><path d="M3 2h9v9h-9zM4 4v6h7v-6z" fill="#808080" fill-rule="evenodd"/></svg></div>
  <div class="tbtn" style="left:339px"><svg class="abs" style="left:-1px;top:-1px" width="16" height="14" shape-rendering="crispEdges"><path d="M4 3h2v1h1v1h2v-1h1v-1h2v1h-1v1h-1v1h-1v1h1v1h1v1h1v1h-2v-1h-1v-1h-2v1h-1v1h-2v-1h1v-1h1v-1h1v-1h-1v-1h-1v-1h-1z" fill="#000"/></svg></div>
</div>
<!-- path group -->
<div class="etched" style="left:417px;top:285px;width:349px;height:26px"></div>
<div class="abs sunken" style="left:422px;top:289px;width:320px;height:20px"></div>
<div class="abs msl" id="kpath" style="left:425px;top:292px;line-height:15px">F:\User32_Drv.SYS</div>
<div class="se" style="left:744px;top:289px;width:18px;height:20px"></div>
<div class="btn" style="left:745px;top:290px;width:16px;height:18px"></div><div class="abs" style="left:749px;top:302px;width:1px;height:1px;background:#000;box-shadow:3px 0 0 #000,6px 0 0 #000"></div>
<!-- control group -->
<div class="etched" style="left:417px;top:316px;width:257px;height:100px"></div>
<div class="etched" style="left:678px;top:316px;width:88px;height:100px"></div>
<div class="se" style="left:422px;top:323px;width:77px;height:23px"></div>
<div class="se" style="left:422px;top:388px;width:77px;height:23px"></div>
<div class="se" style="left:551px;top:323px;width:77px;height:23px"></div>
<div class="se" style="left:551px;top:355px;width:77px;height:23px"></div>
<div class="se" style="left:551px;top:388px;width:77px;height:23px"></div>
<div class="se" style="left:684px;top:323px;width:77px;height:23px"></div>
<div class="se" style="left:684px;top:355px;width:77px;height:23px"></div>
<div class="se" style="left:684px;top:388px;width:77px;height:23px"></div>
<div class="btn kb" style="left:423px;top:324px;width:75px;height:21px"><span class="ms">Reg'n'Run</span></div>
<div class="btn kb dis" style="left:552px;top:324px;width:75px;height:21px"><span class="ms">Run</span></div>
<div class="btn kb" style="left:552px;top:356px;width:75px;height:21px"><span class="ms">I/O Control</span></div>
<div class="btn kb dis" style="left:552px;top:389px;width:75px;height:21px"><span class="ms">Stop</span></div>
<div class="abs" style="left:423px;top:389px;width:75px;height:21px;background:#000"></div>
<div class="btn kb" style="left:424px;top:390px;width:73px;height:19px;line-height:17px"><span class="ms">Stop'n'Unreg</span></div>
<div class="btn kb dis" style="left:685px;top:324px;width:75px;height:21px"><span class="ms">Options...</span></div>
<div class="btn kb" style="left:685px;top:356px;width:75px;height:21px"><span class="ms">About...</span></div>
<div class="btn kb" style="left:685px;top:389px;width:75px;height:21px"><span class="ms">Exit</span></div>
<div class="abs msl" style="left:426px;top:352px;line-height:13px">Code
(hex)</div>
<div class="abs sunken" style="left:462px;top:355px;width:71px;height:21px"></div>
<!-- connector lines and checkboxes -->
<svg class="abs" style="left:498px;top:320px" width="170" height="94" viewBox="498 320 170 94" shape-rendering="crispEdges">
  <g stroke="#404040" stroke-width="2" fill="none">
    <path d="M501 334h15M533 334h15M501 399h15M533 399h15"/>
    <path d="M630 334h22v23M630 365h15M630 399h22v-24"/>
  </g>
</svg>
<div class="abs sunken cb" style="left:519px;top:328px;width:12px;height:13px"></div>
<div class="abs sunken cb" style="left:519px;top:393px;width:12px;height:13px"></div>
<div class="abs sunken cb" style="left:647px;top:360px;width:12px;height:13px"></div>
<svg class="abs" style="left:519px;top:328px" width="13" height="13" viewBox="0 0 13 13" shape-rendering="crispEdges"><path d="M3 5v3l2 2 5-5v-3l-5 5z" fill="#000"/></svg>
<svg class="abs" style="left:519px;top:393px" width="13" height="13" viewBox="0 0 13 13" shape-rendering="crispEdges"><path d="M3 5v3l2 2 5-5v-3l-5 5z" fill="#000"/></svg>
<!-- list -->
<div class="abs sunken" id="klist" style="left:417px;top:424px;width:351px;height:115px;overflow:hidden">
  <div class="abs" style="left:1px;top:1px;width:347px;height:111px;overflow:hidden">
    <!-- grid -->
    <svg class="abs" style="left:0;top:0" width="347" height="95" shape-rendering="crispEdges">
      <g stroke="#DBD8D1" stroke-width="1" fill="none"><path d="M0 18.5h347M0 32.5h347M0 46.5h347M0 60.5h347M0 74.5h347M0 88.5h347M60.5 0v95M120.5 0v95M180.5 0v95"/></g>
    </svg>
    <div class="khdr" style="left:0;width:59px;border-left:0"></div>
    <div class="khdr" style="left:59px;width:60px"></div>
    <div class="khdr" style="left:119px;width:60px"></div>
    <div class="khdr" style="left:179px;width:170px"></div>
    <div class="abs msl" style="left:6px;top:2px;line-height:15px">Driver</div>
    <div class="abs msl" style="left:66px;top:2px;line-height:15px">Operation</div>
    <div class="abs msl" style="left:126px;top:2px;line-height:15px">Status</div>
    <div class="abs msl" style="left:186px;top:2px;line-height:15px">Last Error</div>
    <div class="abs msl" style="left:5px;top:18.5px;line-height:14px">User32_...
User32_...
User32_...
User32_...</div>
    <div class="abs msl" style="left:66px;top:18.5px;line-height:14px">Register
Start
Stop
Unregister</div>
    <div class="abs msl" style="left:126px;top:18.5px;line-height:14px">Success
Success
Success
Success</div>
    <div class="abs msl" id="lasterr" style="left:186px;top:18.5px;line-height:14px">Операция успешно завершена.
Операция успешно завершена.
Операция успешно завершена.
Операция успешно завершена.</div>
    <!-- scrollbar -->
    <div class="abs" id="ktrack" style="left:0;top:95px;width:347px;height:16px;background:repeating-conic-gradient(#fff 0% 25%,#D4D0C8 0% 50%) 0 0/2px 2px"></div>
    <div class="btn sb" style="left:0;top:95px;width:16px;height:16px"><svg class="abs" style="left:-1px;top:-1px" width="16" height="16" shape-rendering="crispEdges"><path d="M8 4v7h-1v-1h-1v-1h-1v-1h-1v-1h1v-1h1v-1h1v-1z" fill="#000"/></svg></div>
    <div class="btn sb" style="left:16px;top:95px;width:188px;height:16px"></div>
    <div class="btn sb" style="left:331px;top:95px;width:16px;height:16px"><svg class="abs" style="left:-1px;top:-1px" width="16" height="16" shape-rendering="crispEdges"><path d="M6 4v7h1v-1h1v-1h1v-1h1v-1h-1v-1h-1v-1h-1v-1z" fill="#000"/></svg></div>
  </div>
</div>
</div>
<div id="edge"></div>
</body>
</html>
